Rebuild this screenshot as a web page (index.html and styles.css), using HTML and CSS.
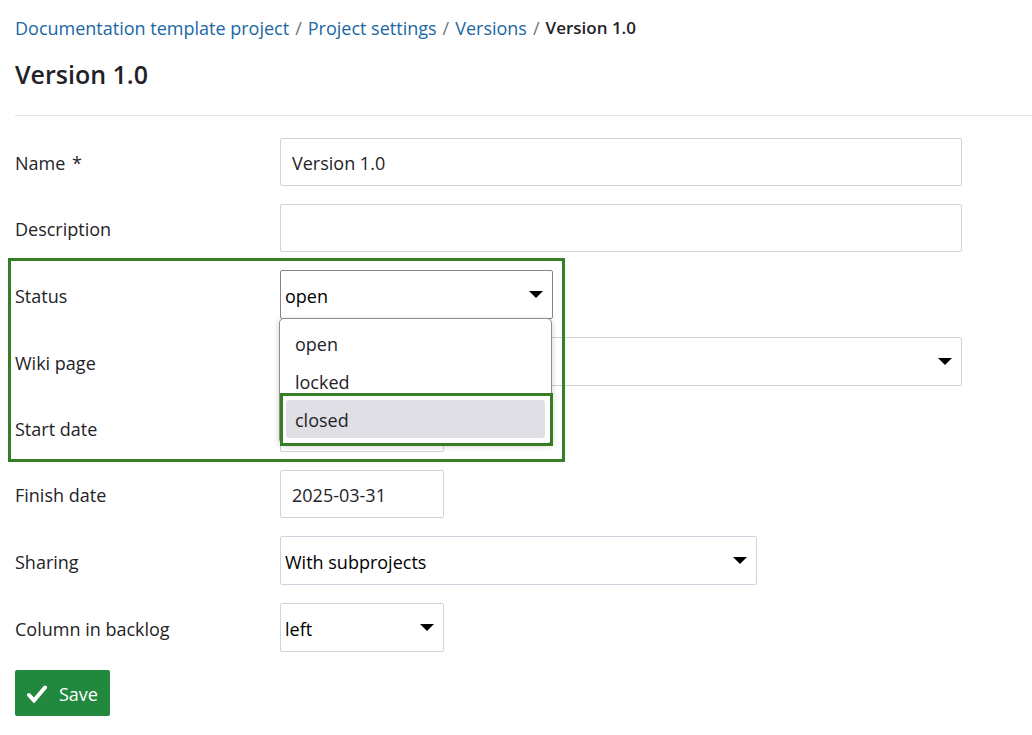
FILE: index.html
```html
<!DOCTYPE html>
<html lang="en">
<head>
    <meta charset="UTF-8">
    <meta name="viewport" content="width=device-width, initial-scale=1.0">
    <title>Version 1.0</title>
    <link rel="stylesheet" href="styles.css">
</head>
<body>
    <nav class="breadcrumb">
        <a href="#">Documentation template project</a>
        <span class="separator">/</span>
        <a href="#">Project settings</a>
        <span class="separator">/</span>
        <a href="#">Versions</a>
        <span class="separator">/</span>
        <span class="current">Version 1.0</span>
    </nav>

    <h1>Version 1.0</h1>

    <form class="form">
        <div class="row">
            <label for="name">Name <span class="required">*</span></label>
            <input type="text" id="name" value="Version 1.0">
        </div>
        <div class="row">
            <label for="description">Description</label>
            <input type="text" id="description">
        </div>

        <div class="group">
            <div class="row">
                <label for="status">Status</label>
                <div class="select medium open">
                    <select id="status">
                        <option selected>open</option>
                        <option>locked</option>
                        <option>closed</option>
                    </select>
                    <ul class="menu" role="listbox" aria-label="Status">
                        <li role="option">open</li>
                        <li role="option">locked</li>
                        <li role="option" class="active" aria-selected="true">closed</li>
                    </ul>
                </div>
            </div>
            <div class="row">
                <label for="wiki-page">Wiki page</label>
                <div class="select">
                    <select id="wiki-page">
                        <option></option>
                    </select>
                </div>
            </div>
            <div class="row">
                <label for="start-date">Start date</label>
                <input type="text" id="start-date" class="small">
            </div>
        </div>

        <div class="row">
            <label for="finish-date">Finish date</label>
            <input type="text" id="finish-date" class="small" value="2025-03-31">
        </div>
        <div class="row">
            <label for="sharing">Sharing</label>
            <div class="select large">
                <select id="sharing">
                    <option>With subprojects</option>
                </select>
            </div>
        </div>
        <div class="row">
            <label for="column">Column in backlog</label>
            <div class="select small">
                <select id="column">
                    <option>left</option>
                </select>
            </div>
        </div>

        <button type="submit" class="save">
            <svg width="20" height="18" viewBox="0 0 20 18" aria-hidden="true">
                <path d="M2 10 L7 15.500 L18 2.500" fill="none" stroke="#fff" stroke-width="4" stroke-linecap="round" stroke-linejoin="miter"/>
            </svg>
            Save
        </button>
    </form>
</body>
</html>
```
FILE: styles.css
```css
*,
*::after {
    box-sizing: border-box;
}
body {
    margin: 0;
    padding: 16px 0 16px 15px;
    font-family: "Segoe UI", "Open Sans", "Noto Sans", sans-serif;
    font-size: 18px;
    line-height: 24px;
    color: #1f2328;
    background: #fff;
}
.breadcrumb {
    display: flex;
    gap: 6px;
}
.breadcrumb a {
    color: #1a67a3;
    text-decoration: none;
}
.separator {
    color: #6e7781;
}
.breadcrumb .current {
    font-size: 17px;
    font-weight: 600;
}
h1 {
    margin: 18px 0 0;
    padding-bottom: 25px;
    border-bottom: 1px solid #e1e3e5;
    font-size: 25px;
    line-height: 32px;
    font-weight: 600;
}
.form,
.group {
    display: flex;
    flex-direction: column;
    gap: 18px;
}
.form {
    padding: 22px 70px 0 0;
}
.group {
    position: relative;
}
/* green frame around the status area */
.group::after {
    content: "";
    position: absolute;
    top: -12px;
    bottom: -10px;
    left: -7px;
    width: 557px;
    border: 3px solid #377d22;
    pointer-events: none;
}
.row {
    display: grid;
    grid-template-columns: 265px 1fr;
    align-items: center;
}
label {
    padding-top: 2px;
}
.required {
    margin-left: 2px;
}
input,
select {
    width: 100%;
    border: 1px solid #cbd5df;
    border-radius: 2px;
    background: #fff;
    font: inherit;
}
input {
    height: 48px;
    padding: 2px 11px 0;
    color: #1f2328;
}
select {
    display: block;
    height: 49px;
    padding: 2px 32px 0 4px;
    color: #000;
    appearance: none;
}
.select {
    position: relative;
}
.select::after {
    content: "";
    position: absolute;
    top: 21px;
    right: 10px;
    border: 7px solid transparent;
    border-top-color: #000;
    border-bottom: 0;
    pointer-events: none;
}
.small {
    width: 24%;
}
.medium {
    width: 40%;
}
.large {
    width: 70%;
}
.open select {
    border-color: #858585;
}
.menu {
    position: absolute;
    z-index: 1;
    top: 48px;
    left: -1px;
    width: 100%;
    margin: 0;
    padding: 5px 6px;
    border: 1px solid #8f8f8f;
    border-radius: 5px;
    background: #fff;
    box-shadow: 0 2px 6px rgba(0, 0, 0, 0.2);
    list-style: none;
}
.menu li {
    padding: 8px 9px 6px;
    border-radius: 3px;
}
.menu .active {
    position: relative;
    background: #e0dfe6;
}
.menu .active::after {
    content: "";
    position: absolute;
    inset: -7px -8px -8px -6px;
    border: 3px solid #377d22;
}
.save {
    display: flex;
    align-items: center;
    align-self: flex-start;
    gap: 12px;
    height: 46px;
    padding: 2px 12px 0;
    border: 0;
    border-radius: 2px;
    background: #22883e;
    color: #fff;
    font: inherit;
}
```
